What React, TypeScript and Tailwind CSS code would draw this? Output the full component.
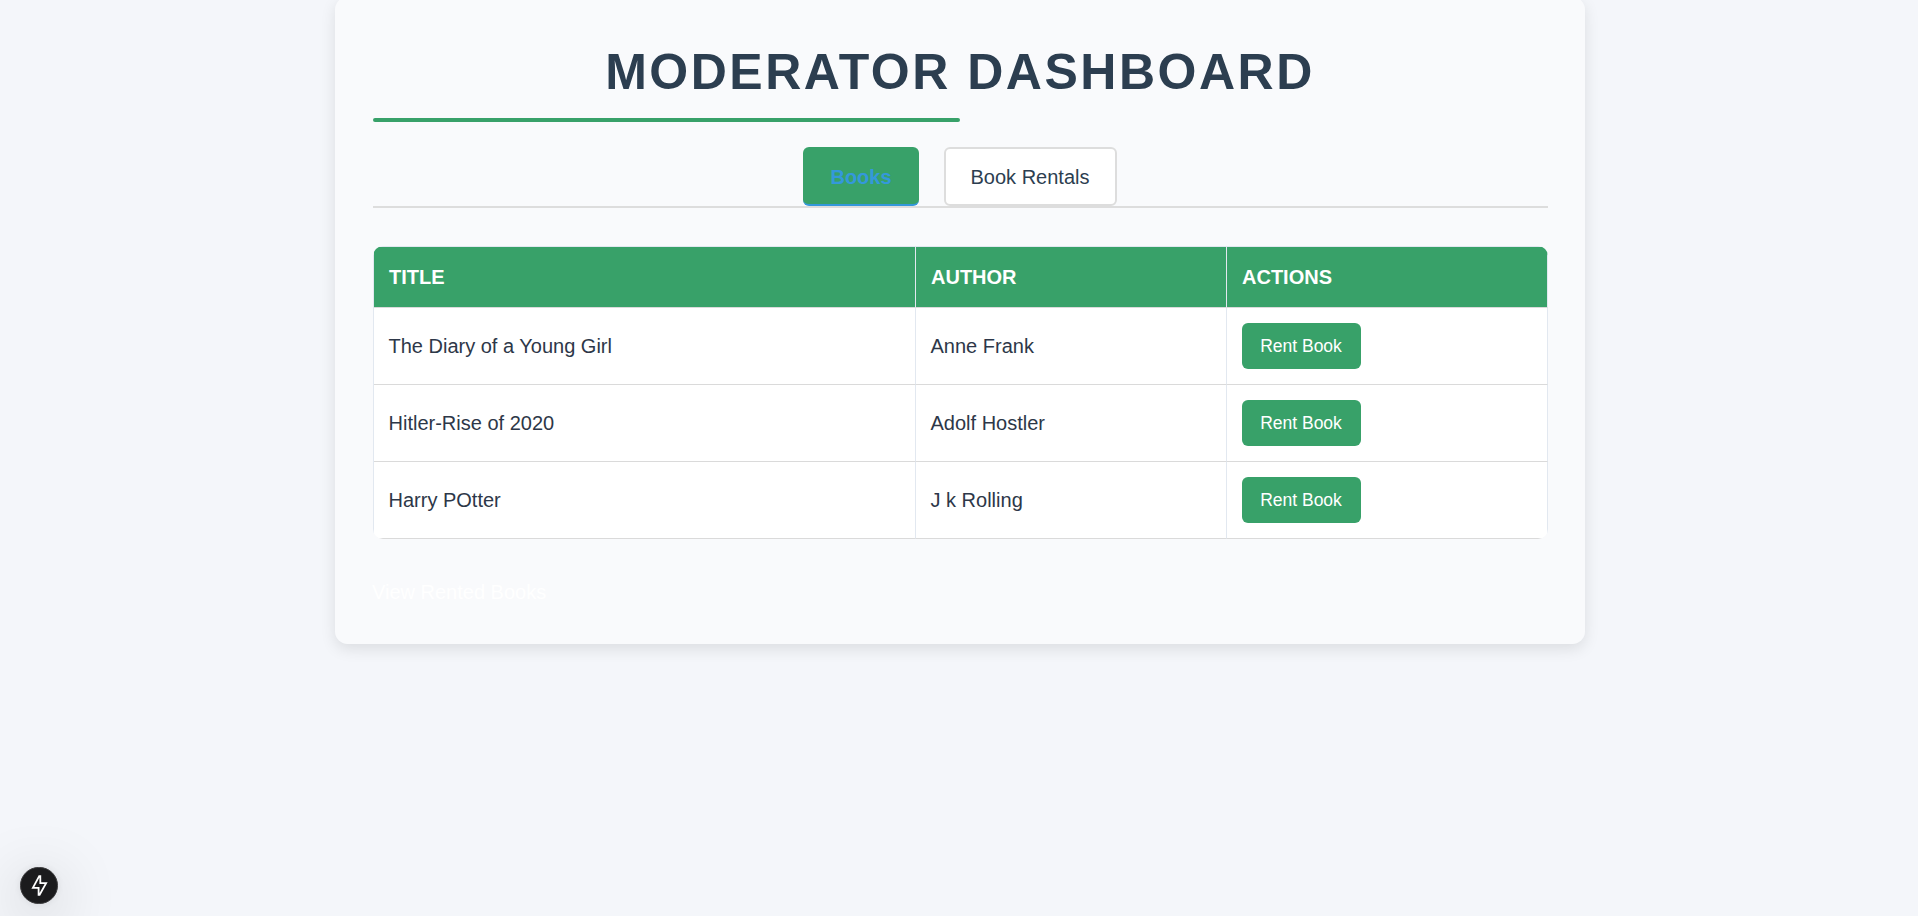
import React from "react";

type Book = { title: string; author: string };

const books: Book[] = [
  { title: "The Diary of a Young Girl", author: "Anne Frank" },
  { title: "Hitler-Rise of 2020", author: "Adolf Hostler" },
  { title: "Harry POtter", author: "J k Rolling" },
];

function Tabs() {
  return (
    <nav className="mt-[25px] flex h-[61px] justify-center gap-[25px] border-b-2 border-[#dddddd] pr-px">
      <button className="h-[59px] w-[116px] rounded-[6px] border-b-2 border-[#3498db] bg-[#38a169] pt-[3px] font-bold text-[#3498db]">
        Books
      </button>
      <button className="h-[59px] w-[173px] rounded-[6px] border-2 border-[#dddddd] bg-white pr-px text-[#2c3e50]">
        Book Rentals
      </button>
    </nav>
  );
}

function BooksTable() {
  const head =
    "h-[61px] border-r border-b border-r-[#e2e8f0] border-b-[#dadada] px-[15px] text-left font-bold";
  const cell = "h-[77px] border-r border-b border-r-[#e2e8f0] border-b-[#dadada] pr-[15px] pl-[14.5px]";
  return (
    <div className="mt-[38px] h-[293px] overflow-hidden rounded-[10px]">
      <table className="w-full table-fixed border-separate border-spacing-0 border-t border-l border-[#e2e8f0] bg-white">
        <colgroup>
          <col className="w-[542px]" />
          <col className="w-[311px]" />
          <col className="w-[321px]" />
        </colgroup>
        <thead className="bg-[#38a169] text-white">
          <tr>
            <th className={head}>TITLE</th>
            <th className={head}>AUTHOR</th>
            <th className={head}>ACTIONS</th>
          </tr>
        </thead>
        <tbody className="text-[#2d3748]">
          {books.map((book) => (
            <tr key={book.title}>
              <td className={cell}>{book.title}</td>
              <td className={cell}>{book.author}</td>
              <td className={cell}>
                <button className="block h-[46px] w-[119px] rounded-[6px] bg-[#38a169] text-[17.5px] text-white">
                  Rent Book
                </button>
              </td>
            </tr>
          ))}
        </tbody>
      </table>
    </div>
  );
}

export default function App() {
  return (
    <div className="h-[916px] overflow-hidden bg-[#f4f6fa] font-['Liberation_Sans',Arial,sans-serif] text-[20px] leading-[30px]">
      <main className="mx-auto -mt-[3px] h-[647px] w-[1250px] translate-x-px rounded-[12.5px] bg-[#f9fafc] pt-[43px] pr-[37px] pl-[38px] shadow-[0_5px_15px_rgba(0,0,0,0.1)]">
        <h1 className="h-[78px] pt-px pr-px text-center text-[50px] leading-[62px] font-bold tracking-[2.5px] text-[#2c3e50]">
          MODERATOR DASHBOARD
        </h1>
        <div className="h-1 w-[587px] rounded-[2px] bg-[#38a169]" />
        <Tabs />
        <BooksTable />
        <a className="mt-[38px] -ml-px block text-white">View Rented Books</a>
      </main>
      <button
        aria-label="Dev tools"
        className="fixed bottom-[12px] left-[20px] flex h-[37px] w-[38px] items-center justify-center rounded-full border border-[#3b3b3d] bg-[#1b1b1d] shadow-[0_0_10px_rgba(0,0,0,0.08),0_12px_60px_rgba(0,0,0,0.25)]"
      >
        <svg className="h-[21px] w-[17px]" viewBox="0 0 17 21" fill="none" stroke="white" strokeWidth="1.8">
          <path d="M8.2 1.1 1.9 12.8H7.6V19.8H8.6L15.1 8.2H9.3V1.1Z" />
        </svg>
      </button>
    </div>
  );
}
